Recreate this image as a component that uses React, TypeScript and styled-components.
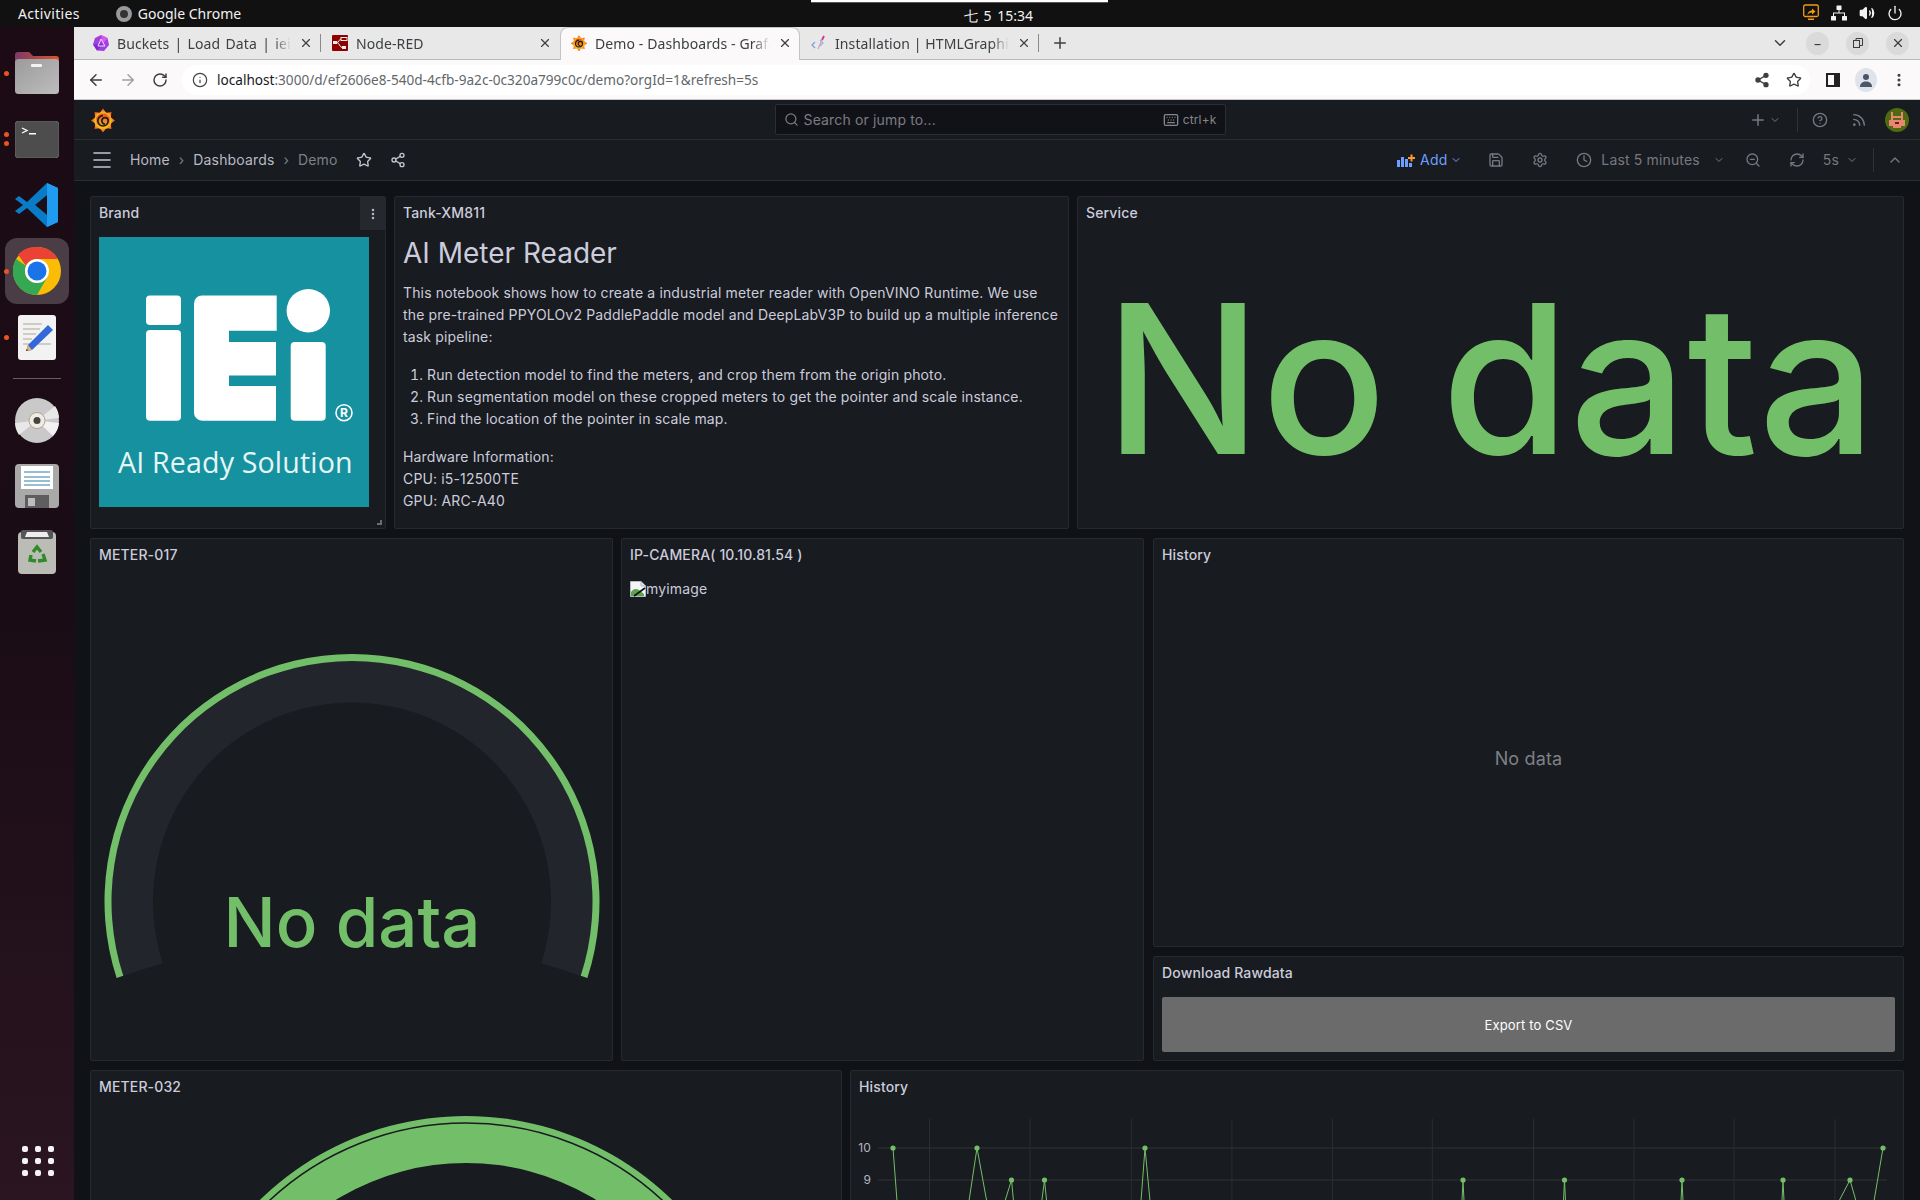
import React from "react";
import styled, { createGlobalStyle } from "styled-components";
import {
  ArrowLeft,
  ArrowRight,
  ChevronDown,
  ChevronUp,
  CircleHelp,
  Clock,
  Info,
  Keyboard,
  Menu,
  MoreVertical,
  Plus,
  Power,
  RefreshCw,
  RotateCw,
  Rss,
  Save,
  Search,
  Settings,
  Share2,
  Star,
  Volume2,
  X,
  ZoomOut,
} from "lucide-react";

const GRAFANA_FONT = `Inter, "Liberation Sans", sans-serif`;
const UI_FONT = `"Noto Sans", "Open Sans", sans-serif`;
const GREEN = "#73bf69";

const GlobalStyle = createGlobalStyle`
  html, body {
    margin: 0;
    padding: 0;
    background: #111217;
    overflow: hidden;
  }
  * {
    box-sizing: border-box;
  }
`;

const Frame = styled.div`
  width: 1920px;
  height: 1200px;
  overflow: hidden;
  display: flex;
  flex-direction: column;
  position: relative;
`;

/* gnome top bar */
const TopBar = styled.div`
  position: relative;
  height: 27px;
  flex: none;
  background: #111111;
  color: #f2f2f2;
  font-family: ${UI_FONT};
  font-size: 14px;
  display: grid;
  grid-template-columns: 1fr auto 1fr;
  align-items: center;
  padding: 0 17px 0 18px;
`;

const TopLeft = styled.div`
  display: flex;
  align-items: center;
  gap: 36px;
`;

const Activities = styled.span`
  letter-spacing: 0.35px;
`;

const AppName = styled.div`
  display: flex;
  align-items: center;
  gap: 6px;
`;

const AppDot = styled.span`
  width: 16px;
  height: 16px;
  border-radius: 50%;
  border: 4px solid #9a9a9a;
  background: #333;
`;

const Clockface = styled.div`
  padding-top: 4px;
  padding-left: 76px;
  font-size: 14px;
  word-spacing: 2px;
`;

const Tray = styled.div`
  display: flex;
  justify-content: flex-end;
  align-items: center;
  gap: 12px;
  padding-bottom: 2px;
`;

const TopStrip = styled.div`
  position: absolute;
  left: 811px;
  top: 0;
  width: 297px;
  height: 3px;
  background: #ffffff;
  border-bottom: 1px solid #555;
`;

const Body = styled.div`
  flex: 1;
  display: flex;
  min-height: 0;
`;

/* dock */
const Dock = styled.div`
  position: relative;
  width: 74px;
  flex: none;
  display: flex;
  flex-direction: column;
  align-items: center;
  padding-top: 13px;
  background: linear-gradient(180deg, #1c0b15 0%, #1a0c15 50%, #2a1520 100%);
`;

const DockSlot = styled.div`
  position: relative;
  width: 64px;
  height: 66px;
  flex: none;
  display: flex;
  align-items: center;
  justify-content: center;
  border-radius: 12px;
  background: ${(p: { $active?: boolean }) => (p.$active ? "#4a3d45" : "transparent")};
`;

const DockDivider = styled.div`
  width: 48px;
  height: 1px;
  flex: none;
  margin: 8px 0;
  background: #6a5c65;
`;

const RunDots = styled.div`
  position: absolute;
  left: -1px;
  top: 0;
  bottom: 0;
  display: flex;
  flex-direction: column;
  justify-content: center;
  gap: 4px;
`;

const RunDot = styled.span`
  width: 5px;
  height: 5px;
  border-radius: 50%;
  background: #e95420;
`;

const AppGrid = styled.div`
  position: absolute;
  left: 22px;
  bottom: 24px;
  display: grid;
  grid-template-columns: repeat(3, 6px);
  gap: 6px 7px;
  span {
    width: 6px;
    height: 6px;
    border-radius: 2px;
    background: #f4f4f4;
  }
`;

const Browser = styled.div`
  flex: 1;
  min-width: 0;
  display: flex;
  flex-direction: column;
`;

/* chrome tabs */
const TabStrip = styled.div`
  height: 33px;
  flex: none;
  display: flex;
  align-items: stretch;
  padding-left: 8px;
  background: #e8e8e8;
  border-bottom: 1px solid #b9b9b9;
  font-family: ${UI_FONT};
  font-size: 14px;
  letter-spacing: 0.1px;
  color: #3c4043;
`;

const Tab = styled.div<{ $active?: boolean; $sep?: boolean; $w: number }>`
  position: relative;
  width: ${(p) => p.$w}px;
  flex: none;
  display: flex;
  align-items: center;
  gap: 8px;
  padding: 0 8px 0 11px;
  ${(p) =>
    p.$active
      ? `background: #fbf9f9; border-radius: 8px 8px 0 0; height: 33px; border: 1px solid #c4c4c4; border-bottom: none; padding: 0 7px 2px 10px;`
      : ""}
  &::after {
    content: "";
    display: ${(p) => (p.$sep ? "block" : "none")};
    position: absolute;
    right: 0;
    top: 7px;
    bottom: 7px;
    width: 1px;
    background: #8a8a8a;
  }
`;

const TabLabel = styled.div<{ $wide?: boolean }>`
  flex: 1;
  min-width: 0;
  white-space: nowrap;
  overflow: hidden;
  word-spacing: ${(p) => (p.$wide ? "1.5px" : "0")};
  -webkit-mask-image: linear-gradient(90deg, #000 90%, transparent 100%);
  mask-image: linear-gradient(90deg, #000 90%, transparent 100%);
`;

const StripEnd = styled.div`
  flex: 1;
  display: flex;
  align-items: center;
  justify-content: flex-end;
  gap: 17px;
  padding-right: 11px;
`;

const NewTab = styled.div`
  display: flex;
  align-items: center;
  margin-left: 12px;
`;

const WinButton = styled.div`
  width: 23px;
  height: 23px;
  border-radius: 50%;
  background: #dadada;
  display: flex;
  align-items: center;
  justify-content: center;
  color: #3c3c3c;
`;

/* chrome address bar */
const Toolbar = styled.div`
  height: 40px;
  flex: none;
  display: flex;
  align-items: center;
  padding: 0 5px 0 6px;
  background: #fbf9f9;
  border-bottom: 1px solid #c9c9c9;
  color: #444;
`;

const ToolSlot = styled.div<{ $w?: number; $dim?: boolean }>`
  width: ${(p) => p.$w ?? 32}px;
  flex: none;
  display: flex;
  align-items: center;
  justify-content: center;
  color: ${(p) => (p.$dim ? "#a0a0a0" : "#3d3d3d")};
`;

const Omnibox = styled.div`
  flex: 1;
  height: 30px;
  margin: 0 6px;
  border-radius: 15px;
  background: #ffffff;
  display: flex;
  align-items: center;
  gap: 9px;
  padding-left: 10px;
  font-family: ${UI_FONT};
  font-size: 13.6px;
  color: #63676b;
  white-space: nowrap;
  b {
    font-weight: 400;
    color: #16181a;
  }
`;

const UrlText = styled.div`
  flex: 1;
`;

const OmniActions = styled.div`
  display: flex;
  align-items: center;
`;

const Profile = styled.div`
  width: 22px;
  height: 24px;
  border-radius: 50%;
  background: #dfe3ea;
  display: flex;
  align-items: center;
  justify-content: center;
`;

/* grafana header */
const TopNav = styled.div`
  height: 40px;
  flex: none;
  display: grid;
  grid-template-columns: 1fr 451px 1fr;
  align-items: center;
  padding: 0 11px 0 17px;
  background: #181b1f;
  border-bottom: 1px solid #2a2d32;
  color: #8f9097;
  font-family: ${GRAFANA_FONT};
  letter-spacing: 0.15px;
`;

const SearchBox = styled.div`
  height: 31px;
  display: flex;
  align-items: center;
  gap: 5px;
  padding: 0 8px 0 8px;
  background: #111217;
  border: 1px solid #2b2e33;
  border-radius: 2px;
  font-size: 14px;
  color: #7b7c83;
`;

const SearchText = styled.div`
  flex: 1;
`;

const Hint = styled.div`
  display: flex;
  align-items: center;
  gap: 4px;
  font-size: 12px;
  color: #85868d;
`;

const NavRight = styled.div`
  display: flex;
  align-items: center;
  justify-content: flex-end;
`;

const Slot = styled.div<{ $ml?: number; $blue?: boolean; $dim?: boolean }>`
  display: flex;
  align-items: center;
  flex: none;
  margin-left: ${(p) => p.$ml ?? 0}px;
  color: ${(p) => (p.$blue ? "#6e9fff" : p.$dim ? "#777880" : "#a4a5ac")};
  font-size: 14px;
  white-space: nowrap;
`;

const VBar = styled.div<{ $ml: number }>`
  width: 1px;
  height: 24px;
  flex: none;
  margin-left: ${(p) => p.$ml}px;
  background: #2f3237;
`;

const CrumbBar = styled.div`
  height: 41px;
  flex: none;
  display: flex;
  align-items: center;
  justify-content: space-between;
  padding: 0 17px 1px 16px;
  background: #181b1f;
  border-bottom: 1px solid #2a2d32;
  font-family: ${GRAFANA_FONT};
  letter-spacing: 0.15px;
  color: #ccccdc;
`;

const Crumbs = styled.div`
  display: flex;
  align-items: center;
  font-size: 14px;
`;

const Crumb = styled.span<{ $ml?: number; $muted?: boolean }>`
  margin-left: ${(p) => p.$ml ?? 0}px;
  color: ${(p) => (p.$muted ? "#7f8087" : "#b9bac6")};
`;

/* dashboard */
const Dashboard = styled.div`
  flex: 1;
  min-height: 0;
  display: flex;
  flex-direction: column;
  gap: 9px;
  padding: 15px 16px 0;
  background: #111217;
  font-family: ${GRAFANA_FONT};
  letter-spacing: 0.15px;
  color: #ccccdc;
`;

const Row = styled.div<{ $cols: string; $h: number }>`
  display: grid;
  flex: none;
  grid-template-columns: ${(p) => p.$cols};
  column-gap: 8px;
  height: ${(p) => p.$h}px;
`;

const Panel = styled.section`
  position: relative;
  min-width: 0;
  min-height: 0;
  height: 100%;
  display: flex;
  flex-direction: column;
  background: #181b1f;
  border: 1px solid #26292e;
  border-radius: 2px;
  overflow: hidden;
`;

const PanelTitle = styled.h2`
  margin: 0;
  height: 32px;
  flex: none;
  display: flex;
  align-items: center;
  padding: 0 8px 2px;
  font-size: 14px;
  font-weight: 500;
  color: #ccccdc;
`;

const PanelBody = styled.div<{ $center?: boolean }>`
  flex: 1;
  min-height: 0;
  display: flex;
  flex-direction: column;
  align-items: ${(p) => (p.$center ? "center" : "stretch")};
  justify-content: ${(p) => (p.$center ? "center" : "flex-start")};
  padding: 8px;
`;

const MenuButton = styled.div`
  position: absolute;
  top: 0;
  right: 0;
  width: 25px;
  height: 33px;
  display: flex;
  align-items: center;
  justify-content: center;
  background: #25282d;
  color: #b5b6c0;
`;

const ResizeHandle = styled.div`
  position: absolute;
  right: 3px;
  bottom: 3px;
  width: 5px;
  height: 5px;
  border-right: 2px solid #6a6c72;
  border-bottom: 2px solid #6a6c72;
`;

const Markdown = styled.div`
  font-size: 14px;
  line-height: 22px;
  color: #ccccdc;
  margin-top: -1px;
  h1 {
    margin: 0 0 12px;
    font-size: 28px;
    line-height: 34px;
    font-weight: 400;
    letter-spacing: 0;
  }
  p {
    margin: 0 0 16px;
  }
  ol {
    margin: 0 0 16px;
    padding-left: 24px;
  }
`;

const HugeNoData = styled.div`
  font-size: 207px;
  line-height: 1;
  font-weight: 500;
  letter-spacing: 0;
  color: ${GREEN};
  white-space: nowrap;
`;

const BrokenImage = styled.div`
  display: flex;
  align-items: center;
  margin-top: 1px;
  font-size: 14px;
  color: #ccccdc;
`;

const GreyNoData = styled.div`
  font-size: 18px;
  color: #7f8087;
`;

const RightColumn = styled.div`
  display: flex;
  flex-direction: column;
  gap: 9px;
  margin-left: 1px;
  min-height: 0;
  height: 100%;
`;

const HistoryCell = styled.div`
  flex: 1;
  min-height: 0;
`;

const DownloadCell = styled.div`
  flex: none;
  height: 105px;
`;

const ExportButton = styled.div`
  flex: 1;
  display: flex;
  align-items: center;
  justify-content: center;
  border-radius: 2px;
  background: #6b6b6b;
  color: #ffffff;
  font-size: 13px;
  font-weight: 400;
`;

const ChartBody = styled.div`
  padding-top: 5px;
  flex: 1;
  min-height: 0;
`;

const GaugeBody = styled.div`
  display: flex;
  justify-content: center;
  padding-top: 5px;
`;

/* drawings */
const GrafanaLogo = ({ size = 24 }: { size?: number }) => {
  const spikes = Array.from({ length: 8 }, (_, i) => i * 45);
  const id = `gf${size}`;
  return (
    <svg width={size} height={size} viewBox="0 0 24 24">
      <defs>
        <linearGradient id={id} x1="0" y1="1" x2="0" y2="0">
          <stop offset="0" stopColor="#fcc419" />
          <stop offset="1" stopColor="#f0431f" />
        </linearGradient>
      </defs>
      <g fill={`url(#${id})`}>
        <circle cx="12" cy="12.5" r="8.8" />
        {spikes.map((a) => (
          <polygon key={a} points="8.4,5.5 12,0.4 15.6,5.5" transform={`rotate(${a} 12 12.5)`} />
        ))}
      </g>
      <path
        d="M12 7.6a5.2 5.2 0 1 0 5.2 5.2 3.2 3.2 0 1 0-3.2 3.2"
        fill="none"
        stroke="#1b1d20"
        strokeWidth="1.7"
      />
    </svg>
  );
};

const InfluxIcon = () => (
  <svg width="16" height="16" viewBox="0 0 16 16">
    <polygon points="8,0 14.5,3 16,10 11,16 4,15.5 0,9.5 2,3" fill="#a33ee0" />
    <polygon points="8,0 14.5,3 10,9" fill="#d85be8" />
    <polygon points="0,9.5 10,9 4,15.5" fill="#7d2bd0" />
    <path d="M8 4 L5 11 H12 Z" fill="none" stroke="#f0d8ff" strokeWidth="1" />
  </svg>
);

const NodeRedIcon = () => (
  <svg width="16" height="16" viewBox="0 0 16 16">
    <rect width="16" height="16" rx="1" fill="#8f0000" />
    <rect x="1" y="6" width="4" height="3" fill="#eee" />
    <rect x="9" y="2.5" width="6" height="3" fill="none" stroke="#eee" />
    <rect x="10" y="11" width="4" height="3" fill="#eee" />
    <path d="M5 7.5C7 7.5 7 4 9 4M5 7.5C7 7.5 8 12.5 10 12.5" fill="none" stroke="#eee" />
  </svg>
);

const HtmlIcon = () => (
  <svg width="16" height="16" viewBox="0 0 16 16" fill="none" strokeWidth="1.2">
    <path d="M4 7 1 10l3 3" stroke="#7b9fd0" />
    <path d="M13 1l-2 4" stroke="#e0307f" strokeWidth="1.8" />
    <path d="M11 5 7 14" stroke="#d9a0c0" />
    <path d="M12 7l3 3-3 3" stroke="#8fb5d8" transform="translate(-3 -2)" />
  </svg>
);

const ScreenShare = () => (
  <svg width="16" height="18" viewBox="0 0 16 18" fill="none">
    <rect x="0.7" y="1" width="14.6" height="11.5" rx="1.5" stroke="#f39a12" strokeWidth="1.3" />
    <path d="M4.5 11C5 7.5 7 6.5 9 6.5V4.5l3.5 3-3.5 3V8.6C7 8.6 5.7 9.3 4.5 11Z" fill="#f39a12" />
    <rect x="5" y="14.5" width="6" height="1.5" fill="#f39a12" />
  </svg>
);

const NetworkIcon = () => (
  <svg width="16" height="16" viewBox="0 0 16 16" fill="#f2f2f2">
    <rect x="5.5" y="0.5" width="5" height="4.5" rx="0.5" />
    <rect x="0" y="11" width="5" height="4.5" rx="0.5" />
    <rect x="11" y="11" width="5" height="4.5" rx="0.5" />
    <path d="M7.5 5h1v2.5H14V11h-1V8.5H3V11H2V7.5h5.5Z" />
  </svg>
);

const FolderIcon = () => (
  <svg width="44" height="42" viewBox="0 0 44 42">
    <defs>
      <linearGradient id="folderTop" x1="0" x2="1">
        <stop offset="0" stopColor="#7e3a66" />
        <stop offset="1" stopColor="#d9562b" />
      </linearGradient>
      <linearGradient id="folderBody" x1="0" y1="0" x2="1" y2="1">
        <stop offset="0" stopColor="#9b9b9b" />
        <stop offset="1" stopColor="#bdbdbd" />
      </linearGradient>
    </defs>
    <path d="M0 14V3a3 3 0 0 1 3-3h11l4 4h23a3 3 0 0 1 3 3v9Z" fill="url(#folderTop)" />
    <rect y="7" width="44" height="35" rx="3.5" fill="url(#folderBody)" />
    <rect x="16" y="12" width="11" height="3" rx="1" fill="#f2f2f2" />
  </svg>
);

const TerminalIcon = () => (
  <svg width="44" height="37" viewBox="0 0 44 37">
    <rect width="44" height="37" rx="4" fill="#4d4d4d" stroke="#666" />
    <path d="M7 7l5 2.5L7 12" fill="none" stroke="#fff" strokeWidth="1.3" />
    <rect x="14" y="12" width="7" height="1.5" fill="#fff" />
  </svg>
);

const VsCodeIcon = () => (
  <svg width="44" height="44" viewBox="0 0 44 44">
    <path d="M32 0 43 5v34l-11 5L12 25 4 31 0 28l8-6-8-6 4-3 8 6Z" fill="#0a7cc7" />
    <path d="M32 0 43 5v34l-11 5 0-12-12-10L32 12Z" fill="#1f9cf0" />
    <path d="M32 12 20 22l12 10Z" fill="#1c1018" />
  </svg>
);

const ChromeIcon = () => (
  <svg width="48" height="48" viewBox="0 0 48 48">
    <circle cx="24" cy="24" r="24" fill="#fbbc04" />
    <path d="M24 0a24 24 0 0 1 20.8 12H24a12 12 0 0 0-11 7L5 7.5A24 24 0 0 1 24 0Z" fill="#ea4335" />
    <path d="M3.2 12A24 24 0 0 0 24 48l10.4-18L24 36a12 12 0 0 1-11-17Z" fill="#34a853" />
    <circle cx="24" cy="24" r="12" fill="#fff" />
    <circle cx="24" cy="24" r="9.5" fill="#1a73e8" />
  </svg>
);

const EditorIcon = () => (
  <svg width="38" height="45" viewBox="0 0 38 45">
    <rect width="38" height="45" rx="3" fill="#f2f2f2" />
    <g stroke="#c6c2b8" strokeWidth="1.6">
      <line x1="5" y1="9" x2="24" y2="9" />
      <line x1="5" y1="14" x2="22" y2="14" />
      <line x1="5" y1="19" x2="18" y2="19" />
      <line x1="5" y1="24" x2="14" y2="24" />
      <line x1="5" y1="29" x2="33" y2="29" />
    </g>
    <path d="M30 10l5 5-21 20-6 1 2-6Z" fill="#3468d8" />
    <path d="M10 30l4 5-6 1Z" fill="#e8b070" />
    <path d="M9 34l1 1.4-2.2.6Z" fill="#333" />
  </svg>
);

const DiscIcon = () => (
  <svg width="44" height="45" viewBox="0 0 44 45">
    <ellipse cx="22" cy="22.5" rx="22" ry="22.5" fill="#c9c9c9" />
    <path d="M22 22.5 40 8A22 22 0 0 1 44 20Z" fill="#e8e8e8" />
    <path d="M22 22.5 4 37A22 22 0 0 1 0 25Z" fill="#e8e8e8" />
    <path d="M22 22.5 44 25a22 22 0 0 1-6 13Z" fill="#f2f2f2" />
    <circle cx="22" cy="22.5" r="8" fill="#f0ece2" stroke="#aaa29a" />
    <circle cx="22" cy="22.5" r="3.5" fill="#444" />
  </svg>
);

const FloppyIcon = () => (
  <svg width="44" height="44" viewBox="0 0 44 44">
    <rect width="44" height="44" rx="4" fill="#a9a9a9" />
    <rect x="6" y="2" width="32" height="23" fill="#fff" />
    <g stroke="#2f7ca6" strokeWidth="1">
      <line x1="9" y1="8" x2="35" y2="8" />
      <line x1="9" y1="13" x2="35" y2="13" />
      <line x1="9" y1="17" x2="35" y2="17" />
      <line x1="9" y1="21" x2="35" y2="21" />
    </g>
    <rect x="10" y="31" width="24" height="13" fill="#5e5e5e" />
    <rect x="13" y="34" width="7" height="8" fill="#bdbdbd" />
  </svg>
);

const TrashIcon = () => (
  <svg width="38" height="44" viewBox="0 0 38 44">
    <rect y="2" width="38" height="42" rx="4" fill="#bcbcb6" />
    <rect x="3" y="0" width="32" height="9" rx="2" fill="#55565a" />
    <path d="M7 7l2-5h20l2 5Z" fill="#eeeeee" />
    <g fill="none" stroke="#2e8b28" strokeWidth="3.4">
      <path d="M15 22l4-5 4 5" />
      <path d="M25 24l2 6-7 1" />
      <path d="M13 25l-1 5 6 1" />
    </g>
  </svg>
);

const IeiLogo = () => (
  <svg width="270" height="270" viewBox="0 0 270 270">
    <rect width="270" height="270" fill="#15919f" />
    <g fill="#ffffff">
      <rect x="47" y="58.5" width="35" height="29.5" rx="4" />
      <rect x="47" y="93" width="35" height="90.7" rx="4" />
      <path d="M103 58.5H177.7V93.7H130V105H177V138.5H130V149H177V183.7H103a8 8 0 0 1-8-8V66.5a8 8 0 0 1 8-8Z" />
      <circle cx="209.3" cy="73.7" r="21.7" />
      <rect x="191.7" y="105" width="35" height="78.7" rx="4" />
      <circle cx="245" cy="175.7" r="8" fill="none" stroke="#ffffff" strokeWidth="1.6" />
      <text x="245" y="180" fontSize="12" fontWeight="700" textAnchor="middle" fontFamily={GRAFANA_FONT}>
        R
      </text>
    </g>
    <text x="19" y="236" fill="#e6f5f6" fontSize="28.6" fontFamily={`"Open Sans", sans-serif`}>
      AI Ready Solution
    </text>
  </svg>
);

const polar = (cx: number, cy: number, r: number, deg: number) => {
  const a = (deg * Math.PI) / 180;
  return [cx + r * Math.cos(a), cy + r * Math.sin(a)];
};

// annular sector, angles are in degrees clockwise from the +x axis
const arcBand = (cx: number, cy: number, outer: number, inner: number, from: number, to: number) => {
  const [ax, ay] = polar(cx, cy, outer, from);
  const [bx, by] = polar(cx, cy, outer, to);
  const [dx, dy] = polar(cx, cy, inner, to);
  const [ex, ey] = polar(cx, cy, inner, from);
  return `M${ax} ${ay}A${outer} ${outer} 0 1 1 ${bx} ${by}L${dx} ${dy}A${inner} ${inner} 0 1 0 ${ex} ${ey}Z`;
};

const EmptyGauge = () => (
  <svg width="500" height="340" viewBox="0 -3.5 500 340">
    <path d={arcBand(250, 252, 241, 199, 162, 378)} fill="#22252b" />
    <path d={arcBand(250, 252, 247.5, 240.5, 162, 378)} fill={GREEN} />
    <text
      x="250"
      y="297"
      textAnchor="middle"
      fontSize="69"
      fontWeight="500"
      fontFamily={GRAFANA_FONT}
      fill={GREEN}
      letterSpacing="0"
    >
      No data
    </text>
  </svg>
);

const FullGauge = () => (
  <svg width="600" height="400" viewBox="0 0 600 400">
    <path d={arcBand(300, 303, 295, 248, 150, 390)} fill={GREEN} />
    <circle cx="300" cy="303" r="288" fill="none" stroke="#181b1f" strokeWidth="1.5" />
  </svg>
);

const VERTICALS = [929.5, 1030, 1131.3, 1231.9, 1332.4, 1432.3, 1533.5, 1634, 1734, 1835];
const TICKS = [
  { label: "10", y: 1148 },
  { label: "9", y: 1180 },
  { label: "8", y: 1212 },
];
// l and r: where the line leaves the peak at the bottom of the view
const PEAKS = [
  { x: 893, y: 1148, r: 897 },
  { x: 977, y: 1148, l: 969, r: 986.7 },
  { x: 1011.5, y: 1180, l: 1005, r: 1013.5 },
  { x: 1044.5, y: 1180, l: 1041.8, r: 1046.6 },
  { x: 1145, y: 1148, l: 1141, r: 1150 },
  { x: 1463, y: 1180, l: 1462, r: 1464 },
  { x: 1564.5, y: 1180, l: 1563.5, r: 1565.5 },
  { x: 1682, y: 1180, l: 1681, r: 1683 },
  { x: 1783, y: 1180, l: 1782, r: 1784 },
  { x: 1850, y: 1180, l: 1839, r: 1856 },
  { x: 1883, y: 1148, l: 1874 },
];

const HistoryChart = () => (
  <svg width="1052" height="300" viewBox="851 1108 1052 300">
    {VERTICALS.map((x) => (
      <line key={x} x1={x} x2={x} y1="1119" y2="1400" stroke="#2a2d31" />
    ))}
    {TICKS.map((t) => (
      <g key={t.label}>
        <line x1="878" x2="1887" y1={t.y} y2={t.y} stroke="#303337" />
        <text
          x="871"
          y={t.y + 4}
          textAnchor="end"
          fontSize="12"
          fontFamily={GRAFANA_FONT}
          fill="#b4b5c0"
        >
          {t.label}
        </text>
      </g>
    ))}
    {PEAKS.map((p) => (
      <g key={p.x}>
        <path
          d={`${p.l !== undefined ? `M${p.l} 1201L` : "M"}${p.x} ${p.y}${p.r !== undefined ? `L${p.r} 1201` : ""}`}
          fill="none"
          stroke={GREEN}
        />
        <circle cx={p.x} cy={p.y} r="2.6" fill={GREEN} />
      </g>
    ))}
  </svg>
);

const BrokenImageIcon = () => (
  <svg width="16" height="16" viewBox="0 0 16 16">
    <path d="M0.5 0.5H11L15.5 5V15.5H0.5Z" fill="#f3f5f8" stroke="#b5b9c0" />
    <path d="M1 15V11C3 8 6 7 9 9L14 13V15Z" fill="#5ba34d" />
    <path d="M4 15 15 7" stroke="#111" strokeWidth="1.6" />
    <path d="M11 .5V5H15.5" fill="#dfe3ea" stroke="#b5b9c0" />
  </svg>
);

const Avatar = () => (
  <svg width="24" height="24" viewBox="0 0 12 12">
    <circle cx="6" cy="6" r="6" fill="#4f6b12" />
    <g fill="#e88673">
      <rect x="3" y="2" width="1" height="4" />
      <rect x="8" y="2" width="1" height="4" />
      <rect x="4" y="4" width="4" height="1" />
      <rect x="2" y="6" width="8" height="3" />
      <rect x="4" y="9" width="4" height="1" />
    </g>
    <rect x="5" y="7" width="2" height="1" fill="#6a1f12" />
  </svg>
);

const AddPanelIcon = () => (
  <svg width="18" height="16" viewBox="0 0 18 16" fill="#6e9fff">
    <rect x="0" y="8" width="3" height="7" />
    <rect x="4" y="5" width="3" height="10" />
    <rect x="8" y="7" width="3" height="8" />
    <rect x="12" y="11" width="3" height="4" />
    <path d="M11 5h2.5V2.5h2V5H18v2h-2.5v2.5h-2V7H11Z" fill="#ff9830" />
  </svg>
);

const tabs = [
  { title: "Buckets | Load Data | iei | InfluxDB", icon: <InfluxIcon />, sep: true, w: 239, wide: true },
  { title: "Node-RED", icon: <NodeRedIcon />, w: 239 },
  { title: "Demo - Dashboards - Grafana", icon: <GrafanaLogo size={16} />, active: true, w: 240 },
  { title: "Installation | HTMLGraphics", icon: <HtmlIcon />, sep: true, w: 239 },
];

const App = () => (
  <Frame>
    <GlobalStyle />
    <TopBar>
      <TopLeft>
        <Activities>Activities</Activities>
        <AppName>
          <AppDot />
          <span>Google Chrome</span>
        </AppName>
      </TopLeft>
      <Clockface>七 5 15:34</Clockface>
      <Tray>
        <ScreenShare />
        <NetworkIcon />
        <Volume2 size={16} fill="#f2f2f2" />
        <Power size={16} />
      </Tray>
      <TopStrip />
    </TopBar>
    <Body>
      <Dock>
        <DockSlot>
          <RunDots><RunDot /></RunDots>
          <FolderIcon />
        </DockSlot>
        <DockSlot>
          <RunDots><RunDot /><RunDot /></RunDots>
          <TerminalIcon />
        </DockSlot>
        <DockSlot><VsCodeIcon /></DockSlot>
        <DockSlot $active>
          <RunDots><RunDot /></RunDots>
          <ChromeIcon />
        </DockSlot>
        <DockSlot>
          <RunDots><RunDot /></RunDots>
          <EditorIcon />
        </DockSlot>
        <DockDivider />
        <DockSlot><DiscIcon /></DockSlot>
        <DockSlot><FloppyIcon /></DockSlot>
        <DockSlot><TrashIcon /></DockSlot>
        <AppGrid>
          {Array.from({ length: 9 }, (_, i) => (
            <span key={i} />
          ))}
        </AppGrid>
      </Dock>
      <Browser>
        <TabStrip>
          {tabs.map((t) => (
            <Tab key={t.title} $active={t.active} $sep={t.sep} $w={t.w}>
              {t.icon}
              <TabLabel $wide={t.wide}>{t.title}</TabLabel>
              <X size={14} strokeWidth={2} />
            </Tab>
          ))}
          <NewTab><Plus size={18} /></NewTab>
          <StripEnd>
            <ChevronDown size={18} />
            <WinButton><span>–</span></WinButton>
            <WinButton>
              <svg width="10" height="10" viewBox="0 0 10 10" fill="none" stroke="#3c3c3c">
                <rect x="0.5" y="2.5" width="6" height="7" />
                <path d="M3 2.5V.5H9.5V7.5H6.5" />
              </svg>
            </WinButton>
            <WinButton><X size={14} /></WinButton>
          </StripEnd>
        </TabStrip>
        <Toolbar>
          <ToolSlot><ArrowLeft size={18} strokeWidth={2} /></ToolSlot>
          <ToolSlot $dim><ArrowRight size={18} strokeWidth={2} /></ToolSlot>
          <ToolSlot><RotateCw size={16} strokeWidth={2.2} /></ToolSlot>
          <Omnibox>
            <Info size={16} strokeWidth={1.8} color="#444" />
            <UrlText>
              <b>localhost</b>:3000/d/ef2606e8-540d-4cfb-9a2c-0c320a799c0c/demo?orgId=1&refresh=5s
            </UrlText>
            <OmniActions>
              <ToolSlot><Share2 size={16} fill="#3d3d3d" /></ToolSlot>
              <ToolSlot><Star size={16} /></ToolSlot>
            </OmniActions>
          </Omnibox>
          <ToolSlot $w={33}>
            <svg width="14" height="14" viewBox="0 0 14 14">
              <rect x="1" y="1" width="12" height="12" fill="none" stroke="#222" strokeWidth="2" />
              <rect x="8" y="1" width="5" height="12" fill="#222" />
            </svg>
          </ToolSlot>
          <ToolSlot $w={33}>
            <Profile>
              <svg width="14" height="14" viewBox="0 0 14 14" fill="#4a5568">
                <circle cx="7" cy="4" r="3" />
                <path d="M1 14c0-4 3-5.5 6-5.5S13 10 13 14Z" />
              </svg>
            </Profile>
          </ToolSlot>
          <ToolSlot $w={33}><MoreVertical size={16} strokeWidth={2.6} /></ToolSlot>
        </Toolbar>
        <TopNav>
          <GrafanaLogo />
          <SearchBox>
            <Search size={15} />
            <SearchText>Search or jump to...</SearchText>
            <Hint>
              <Keyboard size={16} />
              ctrl+k
            </Hint>
          </SearchBox>
          <NavRight>
            <Slot $dim><Plus size={18} /></Slot>
            <Slot $ml={2} $dim><ChevronDown size={12} /></Slot>
            <VBar $ml={16} />
            <Slot $ml={14} $dim><CircleHelp size={16} /></Slot>
            <Slot $ml={23} $dim><Rss size={16} /></Slot>
            <Slot $ml={18}><Avatar /></Slot>
          </NavRight>
        </TopNav>
        <CrumbBar>
          <Crumbs>
            <Menu size={24} strokeWidth={1.6} color="#c4c5d0" />
            <Crumb $ml={16}>Home</Crumb>
            <Crumb $ml={9} $muted>›</Crumb>
            <Crumb $ml={9}>Dashboards</Crumb>
            <Crumb $ml={9} $muted>›</Crumb>
            <Crumb $ml={9} $muted>Demo</Crumb>
            <Slot $ml={18}><Star size={16} color="#c4c5d0" /></Slot>
            <Slot $ml={18}><Share2 size={16} color="#c4c5d0" /></Slot>
          </Crumbs>
          <NavRight>
            <Slot $blue><AddPanelIcon /></Slot>
            <Slot $ml={5} $blue>Add</Slot>
            <Slot $ml={3} $blue><ChevronDown size={12} /></Slot>
            <Slot $ml={26} $dim><Save size={16} /></Slot>
            <Slot $ml={28} $dim><Settings size={16} /></Slot>
            <Slot $ml={28} $dim><Clock size={16} /></Slot>
            <Slot $ml={9} $dim>Last 5 minutes</Slot>
            <Slot $ml={13} $dim><ChevronDown size={12} /></Slot>
            <Slot $ml={20} $dim><ZoomOut size={16} /></Slot>
            <Slot $ml={28} $dim><RefreshCw size={16} /></Slot>
            <Slot $ml={18} $dim>5s</Slot>
            <Slot $ml={7} $dim><ChevronDown size={12} /></Slot>
            <VBar $ml={15} />
            <Slot $ml={13} $dim><ChevronUp size={16} /></Slot>
          </NavRight>
        </CrumbBar>
        <Dashboard>
          <Row $cols="296px 675px 1fr" $h={333}>
            <Panel>
              <PanelTitle>Brand</PanelTitle>
              <MenuButton><MoreVertical size={14} strokeWidth={2.4} /></MenuButton>
              <PanelBody>
                <IeiLogo />
              </PanelBody>
              <ResizeHandle />
            </Panel>
            <Panel>
              <PanelTitle>Tank-XM811</PanelTitle>
              <PanelBody>
                <Markdown>
                  <h1>AI Meter Reader</h1>
                  <p>
                    This notebook shows how to create a industrial meter reader with OpenVINO Runtime. We use
                    the pre-trained PPYOLOv2 PaddlePaddle model and DeepLabV3P to build up a multiple inference
                    task pipeline:
                  </p>
                  <ol>
                    <li>Run detection model to find the meters, and crop them from the origin photo.</li>
                    <li>Run segmentation model on these cropped meters to get the pointer and scale instance.</li>
                    <li>Find the location of the pointer in scale map.</li>
                  </ol>
                  <div>Hardware Information:</div>
                  <div>CPU: i5-12500TE</div>
                  <div>GPU: ARC-A40</div>
                </Markdown>
              </PanelBody>
            </Panel>
            <Panel>
              <PanelTitle>Service</PanelTitle>
              <PanelBody $center>
                <HugeNoData>No data</HugeNoData>
              </PanelBody>
            </Panel>
          </Row>
          <Row $cols="523px 523px 1fr" $h={523}>
            <Panel>
              <PanelTitle>METER-017</PanelTitle>
              <PanelBody $center>
                <EmptyGauge />
              </PanelBody>
            </Panel>
            <Panel>
              <PanelTitle>IP-CAMERA( 10.10.81.54 )</PanelTitle>
              <PanelBody>
                <BrokenImage>
                  <BrokenImageIcon />
                  myimage
                </BrokenImage>
              </PanelBody>
            </Panel>
            <RightColumn>
              <HistoryCell>
                <Panel>
                  <PanelTitle>History</PanelTitle>
                  <PanelBody $center>
                    <GreyNoData>No data</GreyNoData>
                  </PanelBody>
                </Panel>
              </HistoryCell>
              <DownloadCell>
                <Panel>
                  <PanelTitle>Download Rawdata</PanelTitle>
                  <PanelBody>
                    <ExportButton>Export to CSV</ExportButton>
                  </PanelBody>
                </Panel>
              </DownloadCell>
            </RightColumn>
          </Row>
          <Row $cols="752px 1fr" $h={400}>
            <Panel>
              <PanelTitle>METER-032</PanelTitle>
              <GaugeBody>
                <FullGauge />
              </GaugeBody>
            </Panel>
            <Panel>
              <PanelTitle>History</PanelTitle>
              <ChartBody>
                <HistoryChart />
              </ChartBody>
            </Panel>
          </Row>
        </Dashboard>
      </Browser>
    </Body>
  </Frame>
);

export default App;
